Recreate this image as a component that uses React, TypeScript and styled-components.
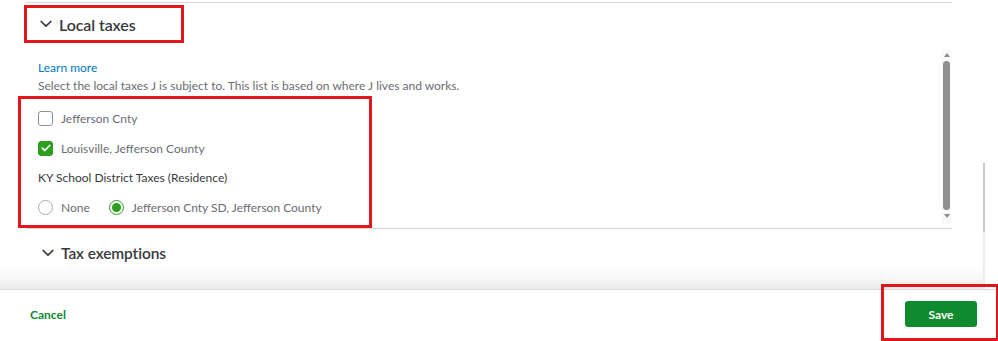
import styled, { createGlobalStyle } from "styled-components"

const Global = createGlobalStyle`
body{
    margin: 0;
    background: #fff;
    font-family: Lato, "Open Sans", sans-serif;
}
`

const Chevron = () => (
    <svg width="12" height="8" viewBox="0 0 12 8">
        <polyline points="1.2,1.5 6,6.2 10.8,1.5" fill="none" stroke="#393a3d" strokeWidth="1.7" strokeLinecap="round" strokeLinejoin="round" />
    </svg>
)

const Check = () => (
    <svg width="10" height="8" viewBox="0 0 10 8">
        <polyline points="1.3,4.2 3.8,6.5 8.7,1.5" fill="none" stroke="#fff" strokeWidth="1.7" strokeLinecap="round" strokeLinejoin="round" />
    </svg>
)

const App = () => {
    return (
        <Page>
            <Global />
            <Main>
                <Content>
                    <Divider />
                    <HeadMark>
                        <SectionHead>
                            <Chevron />
                            <h2>Local taxes</h2>
                        </SectionHead>
                    </HeadMark>
                    <Scroller>
                        <Inner>
                            <LearnMore>Learn more</LearnMore>
                            <Desc>Select the local taxes J is subject to. This list is based on where J lives and works.</Desc>
                            <ListMark>
                                <Option>
                                    <Box />
                                    <span>Jefferson Cnty</span>
                                </Option>
                                <Option>
                                    <Box checked><Check /></Box>
                                    <span>Louisville, Jefferson County</span>
                                </Option>
                                <GroupLabel>KY School District Taxes (Residence)</GroupLabel>
                                <Radios>
                                    <Option>
                                        <Radio />
                                        <span>None</span>
                                    </Option>
                                    <Option>
                                        <Radio selected />
                                        <span>Jefferson Cnty SD, Jefferson County</span>
                                    </Option>
                                </Radios>
                            </ListMark>
                        </Inner>
                        <Bar>
                            <Arrow />
                            <Thumb />
                            <Arrow down />
                        </Bar>
                    </Scroller>
                    <SectionHead closed>
                        <Chevron />
                        <h2>Tax exemptions</h2>
                    </SectionHead>
                </Content>
                <OuterBar>
                    <OuterThumb />
                </OuterBar>
            </Main>
            <Footer>
                <Cancel>Cancel</Cancel>
                <SaveMark>
                    <Save>Save</Save>
                </SaveMark>
            </Footer>
        </Page>
    )
}
export default App;

const Page = styled.div`
width: 998px;
height: 341px;
display: flex;
flex-direction: column;
overflow: hidden;
`
const Main = styled.div`
height: 289px;
display: flex;
`
const Content = styled.div`
width: 985px;
height: 289px;
padding-left: 26px;
padding-right: 33px;
box-sizing: border-box;
background: linear-gradient(to bottom, #fff 0, #fff 266px, #f5f5f5 280px, #e9e9ea 289px);
`
const Divider = styled.div`
margin-top: 2px;
height: 1px;
background-color: #d6d8dc;
`
const HeadMark = styled.div`
margin-top: 2px;
margin-left: -2px;
width: 160px;
height: 38px;
border: 3px solid #e2171e;
box-sizing: border-box;
display: flex;
align-items: center;
`
const SectionHead = styled.div<{ closed?: boolean }>`
display: flex;
align-items: center;
gap: 7px;
padding-left: ${p => (p.closed ? "16px" : "13px")};
height: ${p => (p.closed ? "48px" : "auto")};
h2{
    margin: 0;
    font-size: ${p => (p.closed ? "15.5px" : "16px")};
    font-weight: 600;
    color: #393a3d;
    letter-spacing: -0.1px;
}
`
const Scroller = styled.div`
margin-top: 5px;
height: 180px;
display: flex;
justify-content: space-between;
border-bottom: 1px solid #d6d8dc;
`
const Inner = styled.div`
padding-left: 12px;
padding-top: 12px;
`
const LearnMore = styled.div`
font-size: 12px;
line-height: 16px;
color: #0077c5;
`
const Desc = styled.div`
margin-top: 2px;
font-size: 12px;
line-height: 16px;
color: #6b6c72;
`
const ListMark = styled.div`
margin-top: 2px;
margin-left: -20px;
width: 354px;
height: 132px;
border: 3px solid #e2171e;
box-sizing: border-box;
padding: 9px 0 0 17px;
display: flex;
flex-direction: column;
gap: 10px;
`
const Option = styled.div`
display: flex;
align-items: center;
gap: 8px;
height: 20px;
span{
    font-size: 12px;
    color: #6b6c72;
}
`
const Box = styled.div<{ checked?: boolean }>`
width: 15px;
height: 15px;
box-sizing: border-box;
border-radius: 3px;
border: 1px solid ${p => (p.checked ? "#2ca01c" : "#8d9096")};
background-color: ${p => (p.checked ? "#2ca01c" : "#fff")};
display: flex;
align-items: center;
justify-content: center;
`
const GroupLabel = styled.div`
height: 20px;
line-height: 20px;
font-size: 12px;
color: #393a3d;
`
const Radios = styled.div`
display: flex;
gap: 19px;
margin-top: -1px;
`
const Radio = styled.div<{ selected?: boolean }>`
width: 15px;
height: 15px;
box-sizing: border-box;
border-radius: 50%;
border: 1px solid ${p => (p.selected ? "#2ca01c" : "#a7a9ae")};
display: flex;
align-items: center;
justify-content: center;
&::after{
    content: "";
    display: ${p => (p.selected ? "block" : "none")};
    width: 9px;
    height: 9px;
    border-radius: 50%;
    background-color: #2ca01c;
}
`
const Bar = styled.div`
width: 9px;
margin-right: 1px;
margin-top: 2px;
height: 174px;
background-color: #f8f8f8;
display: flex;
flex-direction: column;
align-items: center;
gap: 4px;
padding-top: 3px;
box-sizing: border-box;
`
const Arrow = styled.div<{ down?: boolean }>`
width: 0;
height: 0;
border-left: 3.5px solid transparent;
border-right: 3.5px solid transparent;
${p => (p.down ? "border-top: 4px solid #8a8a8a;" : "border-bottom: 4px solid #8a8a8a;")}
`
const Thumb = styled.div`
width: 7px;
height: 149px;
border-radius: 4px;
background-color: #8f8f8f;
`
const OuterBar = styled.div`
width: 13px;
`
const OuterThumb = styled.div`
margin-top: 163px;
margin-left: -2px;
width: 2px;
height: 120px;
background: linear-gradient(to bottom, #c9c9c9 0, #c9c9c9 68px, #ececec 70px);
`
const Footer = styled.div`
height: 52px;
border-top: 1px solid #d9dadd;
display: flex;
justify-content: space-between;
align-items: center;
padding-left: 30px;
box-sizing: border-box;
`
const Cancel = styled.div`
font-size: 12px;
font-weight: 700;
color: #108a2e;
cursor: pointer;
margin-top: -3px;
`
const SaveMark = styled.div`
align-self: flex-start;
margin-top: -6px;
width: 117px;
height: 57px;
border: 3px solid #e2171e;
border-right-width: 2px;
box-sizing: border-box;
padding: 14px 0 0 21px;
`
const Save = styled.button`
width: 72px;
height: 26px;
border: none;
border-radius: 3px;
background-color: #0f8a2e;
color: #fff;
font-family: Lato, "Open Sans", sans-serif;
font-size: 12px;
font-weight: 700;
cursor: pointer;
`
